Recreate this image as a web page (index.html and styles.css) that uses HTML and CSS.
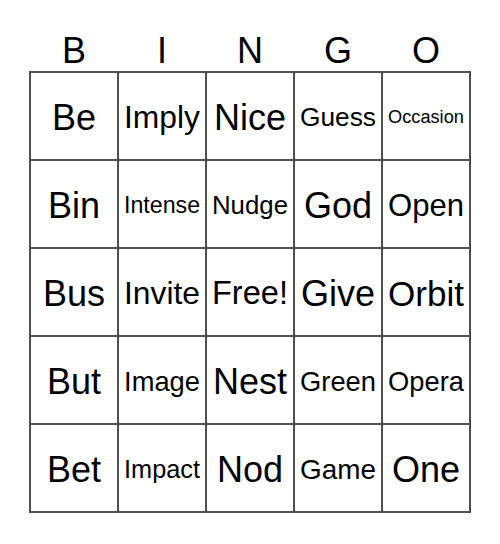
FILE: index.html
```html
<!DOCTYPE html>
<html>
<head>
<meta charset="utf-8">
<link rel="stylesheet" href="styles.css">
</head>
<body>
<div class="card">
  <div class="head">
    <div>B</div><div>I</div><div>N</div><div>G</div><div>O</div>
  </div>
  <div class="board">
    <div class="cell" style="font-size:36px">Be</div>
    <div class="cell" style="font-size:31.8px">Imply</div>
    <div class="cell" style="font-size:36px">Nice</div>
    <div class="cell" style="font-size:26.3px">Guess</div>
    <div class="cell" style="font-size:18.2px">Occasion</div>

    <div class="cell" style="font-size:36px">Bin</div>
    <div class="cell" style="font-size:23.2px">Intense</div>
    <div class="cell" style="font-size:25.8px">Nudge</div>
    <div class="cell" style="font-size:36px">God</div>
    <div class="cell" style="font-size:31.1px">Open</div>

    <div class="cell" style="font-size:36px">Bus</div>
    <div class="cell" style="font-size:31.8px">Invite</div>
    <div class="cell" style="font-size:32.6px">Free!</div>
    <div class="cell" style="font-size:36px">Give</div>
    <div class="cell" style="font-size:35.1px">Orbit</div>

    <div class="cell" style="font-size:36px">But</div>
    <div class="cell" style="font-size:27.3px">Image</div>
    <div class="cell" style="font-size:36px">Nest</div>
    <div class="cell" style="font-size:27.3px">Green</div>
    <div class="cell" style="font-size:27.3px">Opera</div>

    <div class="cell" style="font-size:36px">Bet</div>
    <div class="cell" style="font-size:25.3px">Impact</div>
    <div class="cell" style="font-size:36px">Nod</div>
    <div class="cell" style="font-size:27.9px">Game</div>
    <div class="cell" style="font-size:36px">One</div>
  </div>
</div>
</body>
</html>
```
FILE: styles.css
```css
html, body {
  margin: 0;
  padding: 0;
  background: #fff;
}
body {
  font-family: "Liberation Sans", Arial, sans-serif;
  color: #000;
}
.card {
  padding: 31px 0 0 29px;
}
.head {
  display: grid;
  grid-template-columns: repeat(5, 88px);
  margin-left: 1px;
  height: 40px;
}
.head div {
  font-size: 36px;
  line-height: 40px;
  text-align: center;
}
.board {
  display: grid;
  grid-template-columns: repeat(5, 88px);
  grid-auto-rows: 88px;
  width: max-content;
  border-left: 2px solid #505050;
  border-top: 2px solid #505050;
}
.cell {
  display: flex;
  align-items: center;
  justify-content: center;
  padding-top: 3px;
  border-right: 2px solid #505050;
  border-bottom: 2px solid #505050;
  box-sizing: border-box;
  white-space: nowrap;
  line-height: 1;
}
```
